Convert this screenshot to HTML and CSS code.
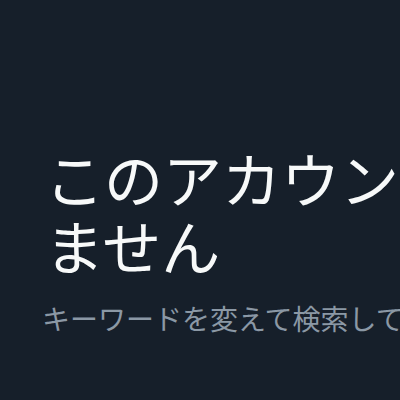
FILE: index.html
```html
<!DOCTYPE html>
<html lang="ja">
<head>
    <meta charset="UTF-8">
    <meta name="viewport" content="width=device-width, initial-scale=1.0">
    <title>このアカウントは存在しません</title>
    <link rel="stylesheet" href="styles.css">
</head>
<body>
    <div class="empty-state">
        <h1 class="empty-title">このアカウントは存在しません</h1>
        <p class="empty-text">キーワードを変えて検索してください。</p>
    </div>
</body>
</html>
```

FILE: styles.css
```css
html, body {
    margin: 0;
    padding: 0;
    height: 100%;
    overflow: hidden;
}
body {
    background-color: #161f2a;
    font-family: "Noto Sans CJK JP", "Noto Sans", sans-serif;
}
.empty-state {
    width: 680px;
    padding: 144px 0 0 42px;
}
.empty-title {
    margin: 0;
    padding-left: 3px;
    font-size: 59px;
    line-height: 67px;
    font-weight: 400;
    color: #f7f9f9;
}
.empty-text {
    margin: 22px 0 0;
    font-size: 28px;
    line-height: 36px;
    color: #8b98a5;
    white-space: nowrap;
}
```
